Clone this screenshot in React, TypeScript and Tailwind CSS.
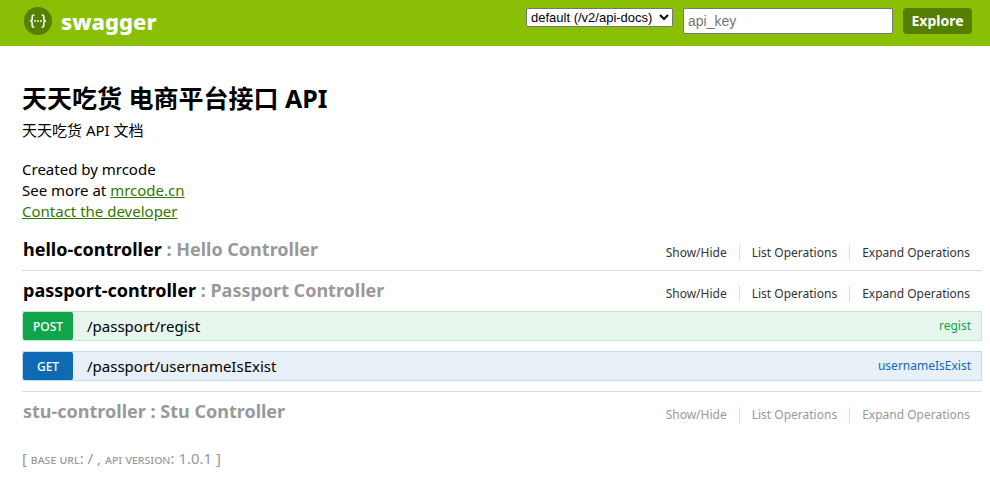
import React from "react";

type Endpoint = { method: "POST" | "GET"; path: string; nickname: string };
type Resource = { name: string; title: string; active: boolean; endpoints: Endpoint[] };

const resources: Resource[] = [
  { name: "hello-controller", title: "Hello Controller", active: true, endpoints: [] },
  {
    name: "passport-controller",
    title: "Passport Controller",
    active: true,
    endpoints: [
      { method: "POST", path: "/passport/regist", nickname: "regist" },
      { method: "GET", path: "/passport/usernameIsExist", nickname: "usernameIsExist" },
    ],
  },
  { name: "stu-controller", title: "Stu Controller", active: false, endpoints: [] },
];

const palette = {
  POST: { row: "bg-[#e7f6ec] border-[#c3e8d1]", badge: "bg-[#10a54a]", link: "text-[#10a54a]" },
  GET: { row: "bg-[#e7f0f7] border-[#c3d9ec]", badge: "bg-[#0f6ab4]", link: "text-[#0f6ab4]" },
};

function Logo() {
  return (
    <svg viewBox="0 0 28 28" className="size-7" aria-hidden="true">
      <circle cx="14" cy="14" r="14" fill="#547f00" />
      <g fill="none" stroke="#f2f6e8" strokeWidth="1.7">
        <path d="M10.500 8H9.800c-1.100 0-1.600.6-1.600 1.700v2.300c0 1.200-.6 1.900-2.200 2 1.600.1 2.200.8 2.200 2v2.300c0 1.100.5 1.700 1.600 1.700h.7" />
        <path d="M17.500 8h.7c1.100 0 1.600.6 1.600 1.700v2.300c0 1.200.6 1.900 2.200 2-1.600.1-2.200.8-2.200 2v2.300c0 1.100-.5 1.700-1.600 1.700h-.7" />
      </g>
      <g fill="#f2f6e8">
        <circle cx="11" cy="14" r="1" />
        <circle cx="14" cy="14" r="1" />
        <circle cx="17" cy="14" r="1" />
      </g>
    </svg>
  );
}

function Operation({ method, path, nickname }: Endpoint) {
  const c = palette[method];
  return (
    <li className={`flex h-[30px] items-center border ${c.row}`}>
      <a href="#" className={`flex h-7 w-[50px] shrink-0 items-center justify-center rounded-xs pt-0.5 text-xs font-medium text-white ${c.badge}`}>{method}</a>
      <a href="#" className="pl-3.5 text-[15px] leading-5 text-black">{path}</a>
      <a href="#" className={`ml-auto pr-2.5 text-xs ${c.link}`}>{nickname}</a>
    </li>
  );
}

export default function App() {
  return (
    <div className="bg-white font-['Noto_Sans','Noto_Sans_CJK_SC',sans-serif] text-black">
      <header className="flex h-[46px] items-start bg-[#89bf04] pt-[7px] pr-[18px] pl-6">
        <a href="#" className="flex items-center gap-[9px] text-[22px] leading-7 font-extrabold text-white"><Logo />swagger</a>
        <form className="ml-auto flex items-start gap-2.5 pt-px">
          <select aria-label="API definition" className="h-[19px] w-[147px] rounded-xs border border-[#767676] bg-white font-['Liberation_Sans',sans-serif] text-[13px] text-black">
            <option>default (/v2/api-docs)</option>
          </select>
          <input aria-label="API key" placeholder="api_key" className="h-[26px] w-[210px] rounded-xs border border-[#767676] bg-white px-1 font-['Liberation_Sans',sans-serif] text-sm placeholder:text-[#757575]" />
          <button type="button" className="h-[26px] w-[69px] rounded-sm bg-[#547f00] text-center text-sm font-bold text-white">Explore</button>
        </form>
      </header>
      <main className="pt-9 pr-2 pl-[22px]">
        <h1 className="text-[25px] leading-8 font-bold">天天吃货 电商平台接口 API</h1>
        <p className="mt-1.5 text-[15px] leading-5">天天吃货 API 文档</p>
        <div className="mt-[19px] text-[15px] leading-[21px]">
          <div>Created by mrcode</div>
          <div>See more at <a href="#" className="text-[#337700] underline">mrcode.cn</a></div>
          <a href="#" className="text-[#337700] underline">Contact the developer</a>
        </div>
        <ul className="mt-2">
          {resources.map((r) => (
            <li key={r.name} className={`border-[#ddd] ${r.active ? "border-b" : ""}`}>
              <div className="flex h-10 items-start">
                <h2 className={`pt-[5px] pl-px text-lg font-bold ${r.active ? "text-black" : "text-[#999]"}`}>{r.name} <span className="text-[#999]">: {r.title}</span></h2>
                <nav className={`ml-auto flex pt-[15px] text-xs leading-4 ${r.active ? "text-[#333]" : "text-[#999]"}`}>
                  <a href="#" className="px-3">Show/Hide</a>
                  <a href="#" className="border-l border-[#ddd] px-3">List Operations</a>
                  <a href="#" className="border-l border-[#ddd] px-3">Expand Operations</a>
                </nav>
              </div>
              {r.endpoints.length > 0 && <ul className="flex flex-col gap-2.5 pb-2.5">{r.endpoints.map((e) => <Operation key={e.path} {...e} />)}</ul>}
            </li>
          ))}
        </ul>
        <footer className="mt-3.5 text-[15px] leading-6 text-[#999]">[ <span className="text-[13px] [font-variant:small-caps]">base url</span>: / , <span className="text-[13px] [font-variant:small-caps]">api version</span>: 1.0.1 ]</footer>
      </main>
    </div>
  );
}
